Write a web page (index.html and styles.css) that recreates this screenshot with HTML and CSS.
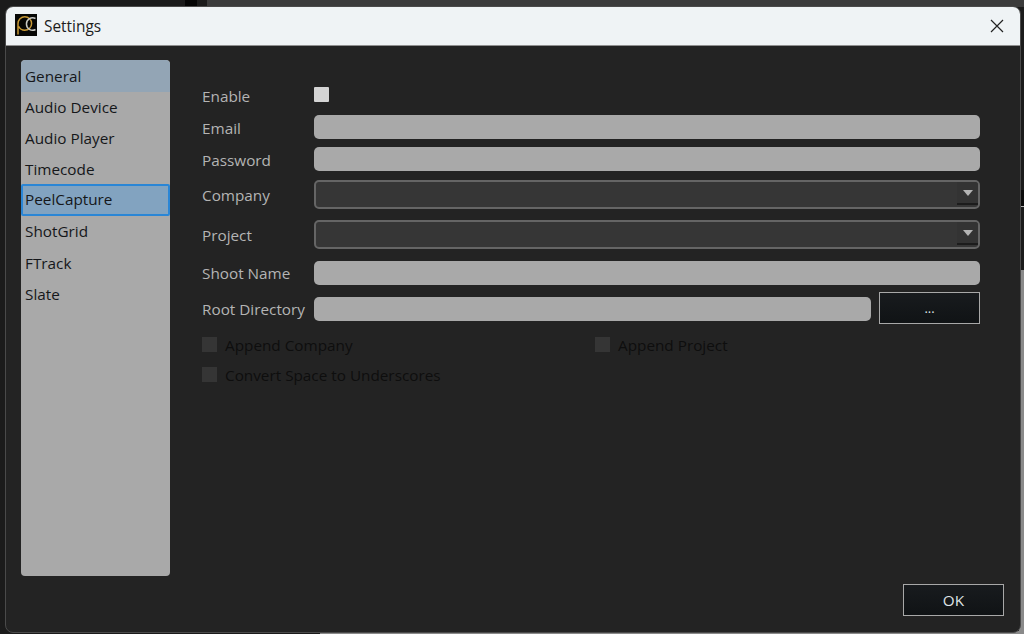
FILE: index.html
```html
<!DOCTYPE html>
<html lang="en">
<head>
<meta charset="utf-8">
<title>Settings</title>
<link rel="stylesheet" href="styles.css">
</head>
<body>
<div class="backdrop">
  <div class="bg-top"><span class="bg-black"></span></div>
  <div class="bg-mark"></div>
  <div class="bg-side"></div>
  <div class="bg-bottom"></div>
</div>
<div class="window">
  <header class="titlebar">
    <svg class="logo" viewBox="0 0 22 22" aria-hidden="true">
      <rect width="22" height="22" fill="#070705"/>
      <path d="M3 20.5V9.5A6.8 6.8 0 1 1 9.8 16.3A6.8 6.8 0 0 1 3.6 12.3" fill="none" stroke="#c99a35" stroke-width="1.5"/>
      <path d="M20.5 4.5A6.2 6.2 0 1 0 20.5 15.5" fill="none" stroke="#c9c9c4" stroke-width="1.5"/>
    </svg>
    <span class="title">Settings</span>
    <svg class="close" viewBox="0 0 14 14" aria-hidden="true">
      <path d="M1 1L13 13M13 1L1 13" stroke="#222" stroke-width="1.2" fill="none"/>
    </svg>
  </header>
  <main class="content">
    <nav class="sidebar">
      <div class="nav-item nav-selected">General</div>
      <div class="nav-item">Audio Device</div>
      <div class="nav-item">Audio Player</div>
      <div class="nav-item">Timecode</div>
      <div class="nav-item nav-focus">PeelCapture</div>
      <div class="nav-item">ShotGrid</div>
      <div class="nav-item nav-low">FTrack</div>
      <div class="nav-item nav-low">Slate</div>
    </nav>
    <section class="panel">
      <div class="form">
        <div class="row row-enable">
          <label class="label">Enable</label>
          <span class="check"></span>
        </div>
        <div class="row row-input">
          <label class="label label-low">Email</label>
          <span class="input"></span>
        </div>
        <div class="row row-input">
          <label class="label label-low">Password</label>
          <span class="input"></span>
        </div>
        <div class="row row-combo">
          <label class="label label-low">Company</label>
          <span class="combo"><span class="combo-btn"><i class="arrow"></i></span></span>
        </div>
        <div class="row row-combo">
          <label class="label label-low">Project</label>
          <span class="combo"><span class="combo-btn"><i class="arrow"></i></span></span>
        </div>
        <div class="row row-input">
          <label class="label">Shoot Name</label>
          <span class="input"></span>
        </div>
        <div class="row row-root">
          <label class="label">Root Directory</label>
          <span class="input"></span>
          <button class="btn btn-browse">...</button>
        </div>
      </div>
      <div class="options">
        <div class="option"><span class="check-off"></span>Append Company</div>
        <div class="option"><span class="check-off"></span>Append Project</div>
        <div class="option"><span class="check-off"></span>Convert Space to Underscores</div>
      </div>
      <div class="footer"><button class="btn btn-ok">OK</button></div>
    </section>
  </main>
</div>
</body>
</html>
```
FILE: styles.css
```css
* { box-sizing: border-box; }
html, body { margin: 0; height: 100%; }
body {
  background: #1b1b1b;
  font-family: "Open Sans", "Noto Sans", sans-serif;
  font-size: 15px;
  overflow: hidden;
  width: 1024px;
  height: 634px;
  position: relative;
}
.backdrop { position: absolute; inset: 0; }
.bg-top {
  position: absolute; left: 207px; top: 0; right: 0; height: 7px;
  background: #3b3b3b;
}
.bg-black { position: absolute; left: -22px; top: 0; width: 12px; height: 7px; background: #050505; }
.bg-mark {
  position: absolute; right: 0; top: 190px; width: 4px; height: 17px;
  background: #0a0a0a;
  border-bottom: 1px solid #b5b5b5;
}
.bg-side {
  position: absolute; right: 0; top: 270px; bottom: 0; width: 5px;
  background: #8a8a8a;
}
.bg-bottom {
  position: absolute; left: 320px; right: 0; bottom: 0; height: 3px;
  background: #8a8a8a;
}
.window {
  position: absolute;
  left: 5px; top: 6px;
  width: 1016px; height: 627px;
  border: 1px solid #4a4a4a;
  border-radius: 8px;
  overflow: hidden;
  background: #232323;
  display: flex;
  flex-direction: column;
}
.titlebar {
  height: 39px;
  flex: none;
  background: #eff3f5;
  border-bottom: 1px solid #8f8f8f;
  display: flex;
  align-items: center;
  padding: 0 16px 0 9px;
  color: #1c1c1c;
}
.logo { width: 22px; height: 22px; flex: none; margin-top: -2px; }
.title { margin-left: 7px; font-size: 15.4px; flex: 1; }
.close { width: 14px; height: 14px; flex: none; margin-top: -1px; }
.content {
  flex: 1;
  display: flex;
  padding: 14px 0 0 15px;
  min-height: 0;
}
.sidebar {
  width: 149px;
  height: 516px;
  flex: none;
  background: #a9a9a9;
  border-radius: 4px;
  color: #15171a;
  overflow: hidden;
}
.nav-item {
  height: 31px;
  padding: 0 4px;
  line-height: 30px;
  white-space: nowrap;
  font-size: 15.3px;
}
.nav-selected { background: #93a5b5; height: 32px; line-height: 32px; border-radius: 4px 4px 0 0; }
.nav-low { line-height: 32px; }
.nav-focus {
  background: #82a3c0;
  border: 2px solid #2a86d6;
  border-radius: 2px;
  height: 32px;
  line-height: 27px;
  padding: 0 2px;
  margin-top: -1px;
}
.panel {
  flex: 1;
  display: flex;
  flex-direction: column;
  padding: 22px 40px 0 32px;
  min-width: 0;
}
.form { display: flex; flex-direction: column; }
.row {
  display: grid;
  grid-template-columns: 112px 1fr;
  align-items: center;
}
.label { color: #b4b4b4; font-size: 15.3px; white-space: nowrap; }
.label-low { padding-top: 1px; }
.row-enable { height: 14px; margin-bottom: 19px; }
.row-enable .label { padding-top: 4px; }
.row-input { height: 24px; margin-bottom: 8px; }
.row-input + .row-combo { margin-top: 1px; }
.row-combo { height: 29px; margin-bottom: 11px; }
.row-combo + .row-input { margin-top: 1px; }
.row-root {
  grid-template-columns: 112px 1fr 101px;
  grid-template-rows: 24px;
  height: 24px;
  margin-top: 4px;
}
.row-root .input { margin-right: 8px; }
.check { width: 15px; height: 15px; background: #d4d4d4; border-radius: 1px; }
.input {
  display: block;
  height: 24px;
  background: #a9a9a9;
  border-radius: 5px;
}
.combo {
  display: flex;
  justify-content: flex-end;
  height: 29px;
  background: #363636;
  border: 2px solid #656565;
  border-radius: 5px;
  overflow: hidden;
}
.combo-btn {
  width: 21px;
  border-bottom: 2px solid #1c1c1c;
  margin-bottom: 2px;
  background: #333;
  display: flex;
  align-items: center;
  justify-content: center;
}
.arrow {
  width: 0; height: 0;
  border-left: 5px solid transparent;
  border-right: 5px solid transparent;
  border-top: 6px solid #b4b4b4;
}
.btn {
  font-family: inherit;
  color: #dfe3e6;
  background: linear-gradient(#181b1e, #101315);
  border: 1px solid #a8a8a8;
  padding: 0;
  height: 32px;
  width: 101px;
}
.btn-browse { font-size: 13px; margin: -4px 0; position: relative; top: -1px; }
.btn-ok { font-size: 15.3px; }
.options {
  display: grid;
  grid-template-columns: 393px 1fr;
  row-gap: 7px;
  margin-top: 12px;
  color: #0e0e0e;
  font-size: 15.3px;
}
.option { display: flex; align-items: center; height: 23px; white-space: nowrap; }
.check-off {
  width: 15px; height: 15px;
  background: #353535;
  margin-right: 8px;
  flex: none;
}
.footer {
  margin-top: auto;
  display: flex;
  justify-content: flex-end;
  margin-right: -24px;
  margin-bottom: 16px;
}
```
